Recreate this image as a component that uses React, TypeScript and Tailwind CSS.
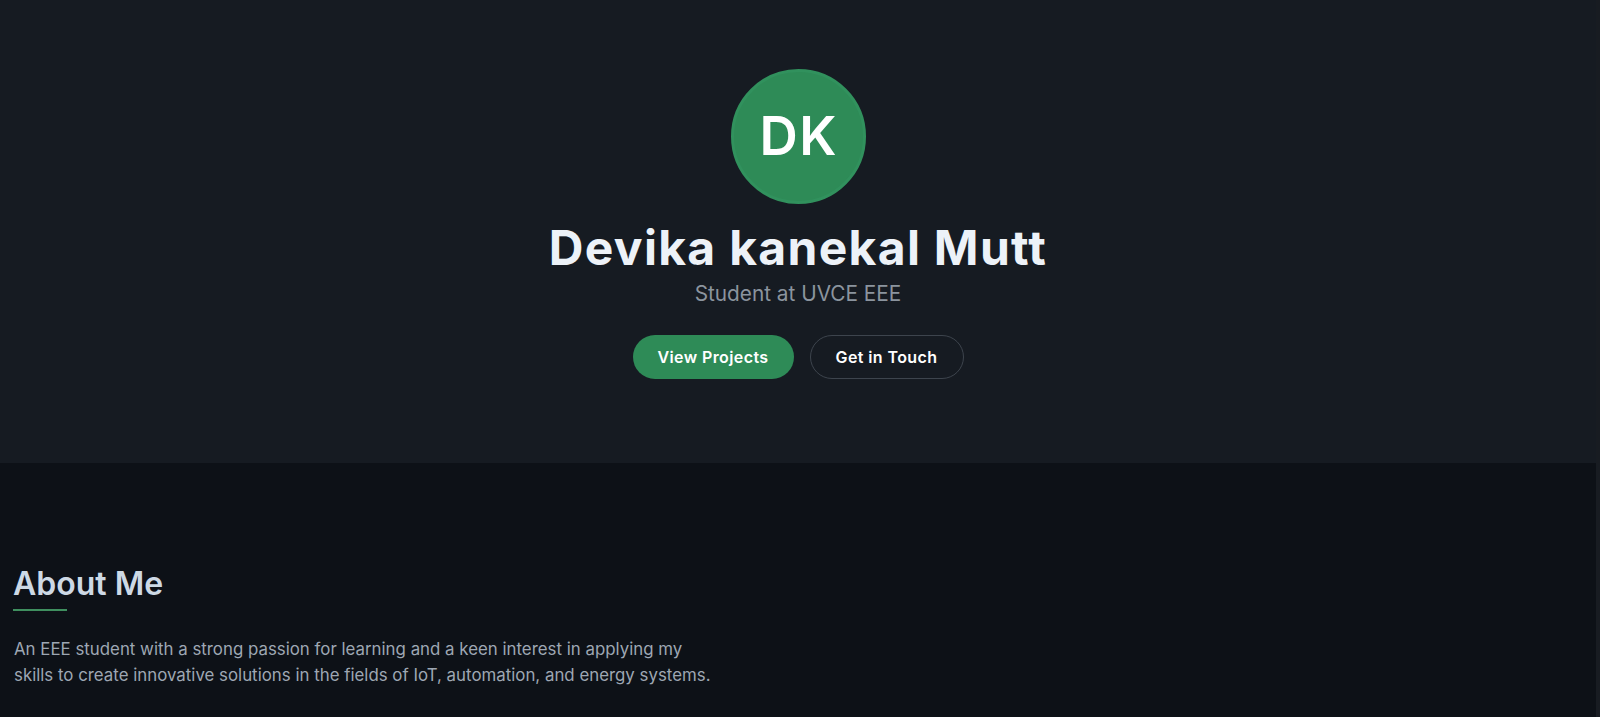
import React from "react";

export default function App() {
  return (
    <div className="flex min-h-[717px] w-full bg-[#0d1117]" style={{ fontFamily: "Inter, 'Noto Sans', sans-serif" }}>
      <main className="min-w-0 flex-1 text-[#c9d1d9]">
        <section className="flex h-[463px] flex-col items-center bg-[#161b22] pt-[69px]">
          <div className="flex h-[135px] w-[135px] items-center justify-center rounded-full border-[3px] border-[#31915d] bg-[#2e8b57]">
            <span className="pl-[1.5px] text-[53px] font-semibold leading-none tracking-[1.5px] text-white">DK</span>
          </div>
          <h1 className="mt-[20px] text-[48px] font-bold leading-none tracking-[1.3px] text-[#edf2f8]">
            Devika kanekal Mutt
          </h1>
          <p className="mt-2 text-[20.8px] leading-7 text-[#8b949e]">Student at UVCE EEE</p>
          <div className="mt-[27px] flex gap-4">
            <button className="h-[44px] w-[161px] rounded-full bg-[#2e8b57] text-base font-semibold tracking-[0.4px] text-white">
              View Projects
            </button>
            <button className="h-[44px] w-[154px] rounded-full border border-[#3d444d] bg-transparent text-base font-semibold tracking-[0.4px] text-white">
              Get in Touch
            </button>
          </div>
        </section>
        <section className="px-[13px] pb-10 pt-[103px]">
          <h2 className="text-[32px] font-semibold leading-9 text-[#cdd9e5]">About Me</h2>
          <div className="mt-[7px] h-[2px] w-[54px] bg-[#3f8f5f]" />
          <p className="mt-[26px] max-w-[700px] pl-px text-[16.85px] leading-[25.6px] text-[#9ea7b3]">
            An EEE student with a strong passion for learning and a keen interest in applying my skills to create innovative solutions in the fields of IoT, automation, and energy systems.
          </p>
        </section>
      </main>
      <div className="w-[4px] shrink-0 bg-[#181c22]" />
    </div>
  );
}
